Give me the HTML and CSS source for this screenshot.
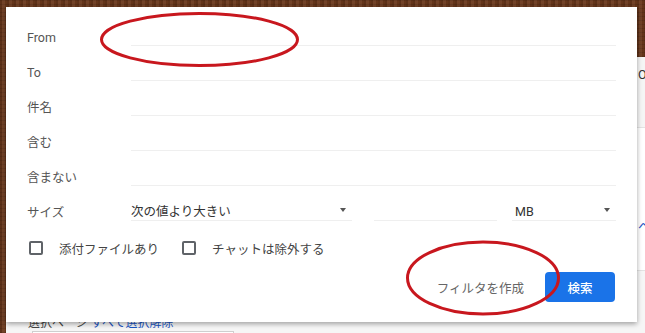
FILE: index.html
```html
<!DOCTYPE html>
<html lang="ja">
<head>
<meta charset="utf-8">
<link rel="stylesheet" href="styles.css">
</head>
<body>
<div class="page">
  <div class="prow prow-top"><span class="peek">OFF</span></div>
  <div class="prow prow-mid"><span class="peek link">ページ</span></div>
  <div class="prow prow-bot">
    <div class="sel-text">選択ページ <span class="link">すべて選択解除</span></div>
    <div class="sel-box"></div>
  </div>
</div>

<div class="dialog">
  <div class="row">
    <div class="label">From</div>
    <div class="field"></div>
  </div>
  <div class="row">
    <div class="label">To</div>
    <div class="field"></div>
  </div>
  <div class="row">
    <div class="label">件名</div>
    <div class="field"></div>
  </div>
  <div class="row">
    <div class="label">含む</div>
    <div class="field"></div>
  </div>
  <div class="row">
    <div class="label">含まない</div>
    <div class="field"></div>
  </div>
  <div class="row">
    <div class="label">サイズ</div>
    <div class="sizes">
      <div class="select sel-cmp"><span class="val">次の値より大きい</span><span class="arrow"></span></div>
      <div class="field num"></div>
      <div class="select sel-unit"><span class="val">MB</span><span class="arrow"></span></div>
    </div>
  </div>
  <div class="checks">
    <label class="check"><span class="box"></span><span>添付ファイルあり</span></label>
    <label class="check"><span class="box"></span><span>チャットは除外する</span></label>
  </div>
  <div class="actions">
    <span class="filter">フィルタを作成</span>
    <span class="search">検索</span>
  </div>
</div>

<svg class="marks" width="645" height="333" viewBox="0 0 645 333">
  <ellipse cx="199.5" cy="39.5" rx="98" ry="26" fill="none" stroke="#c8171e" stroke-width="3"/>
  <ellipse cx="483" cy="278" rx="75.5" ry="36" fill="none" stroke="#c8171e" stroke-width="3"/>
</svg>
</body>
</html>
```

FILE: styles.css
```css
html, body {
  margin: 0;
  padding: 0;
}
body {
  width: 645px;
  height: 333px;
  overflow: hidden;
  position: relative;
  font-family: Roboto, "Noto Sans CJK JP", sans-serif;
  background:
    repeating-linear-gradient(90deg, rgba(0,0,0,0.12) 0 2px, rgba(255,255,255,0.05) 2px 5px, rgba(0,0,0,0.06) 5px 7px),
    repeating-linear-gradient(0deg, rgba(0,0,0,0.1) 0 1px, transparent 1px 4px),
    #6a381c;
}

.page {
  margin-left: 6px;
  margin-top: 57px;
  height: 276px;
  background: #fafafa;
  display: flex;
  flex-direction: column;
}
.prow {
  border-bottom: 1px solid #e3e3e3;
  box-sizing: border-box;
  padding-left: 632px;
  font-size: 12.5px;
  color: #333;
  white-space: nowrap;
  overflow: hidden;
}
.prow-top {
  height: 71px;
  padding-top: 10px;
  background: #f5f5f5;
}
.prow-mid {
  height: 143px;
  padding-top: 88px;
  background: #fff;
}
.prow-bot {
  flex: 1;
  border-bottom: none;
  padding-left: 22px;
  padding-top: 46px;
  background: #f6f6f6;
}
.link {
  color: #1a55c4;
}
.sel-text {
  font-size: 12px;
  line-height: 12px;
  color: #444;
}
.sel-box {
  margin-left: 4px;
  margin-top: 2px;
  width: 200px;
  height: 10px;
  border: 1px solid #cfcfcf;
  background: #fff;
}

.dialog {
  position: absolute;
  left: 6px;
  top: 7px;
  width: 631px;
  height: 315px;
  box-sizing: border-box;
  background: #fff;
  box-shadow: 0 2px 5px rgba(0,0,0,0.35);
  padding: 4px 21px 0 21px;
  display: flex;
  flex-direction: column;
}

.row {
  height: 35px;
  display: flex;
  align-items: stretch;
}
.label {
  width: 104px;
  flex: none;
  align-self: flex-end;
  font-size: 12.5px;
  line-height: 16px;
  color: #555;
}
.field {
  flex: 1;
  border-bottom: 1px solid #efefef;
}
.sizes {
  flex: 1;
  display: flex;
}
.select {
  display: flex;
  align-items: flex-end;
  justify-content: space-between;
  border-bottom: 1px solid #efefef;
  font-size: 12.5px;
  line-height: 16px;
  color: #333;
}
.sel-cmp {
  width: 221px;
}
.num {
  flex: none;
  width: 123px;
  margin-left: 22px;
}
.sel-unit {
  margin-left: 15px;
  flex: 1;
  padding-left: 3px;
}
.arrow {
  width: 0;
  height: 0;
  border-left: 3.5px solid transparent;
  border-right: 3.5px solid transparent;
  border-top: 4px solid #555;
  margin: 0 6px 8px 0;
}

.checks {
  margin-top: 20px;
  display: flex;
  align-items: center;
  height: 14px;
  padding-left: 2px;
}
.check {
  display: flex;
  align-items: center;
  font-size: 12.5px;
  color: #444;
  margin-right: 23px;
}
.box {
  width: 10px;
  height: 10px;
  border: 2px solid #5f6368;
  border-radius: 2px;
  margin-right: 16px;
}

.actions {
  margin-top: 17px;
  display: flex;
  justify-content: flex-end;
  align-items: center;
  padding-right: 1px;
}
.filter {
  font-size: 12.5px;
  color: #666;
  margin-right: 21px;
}
.search {
  width: 70px;
  height: 30px;
  border-radius: 4px;
  background: #1a73e8;
  color: #fff;
  font-size: 12.5px;
  font-weight: 500;
  display: flex;
  align-items: center;
  justify-content: center;
}

.marks {
  position: absolute;
  left: 0;
  top: 0;
  pointer-events: none;
}
```
